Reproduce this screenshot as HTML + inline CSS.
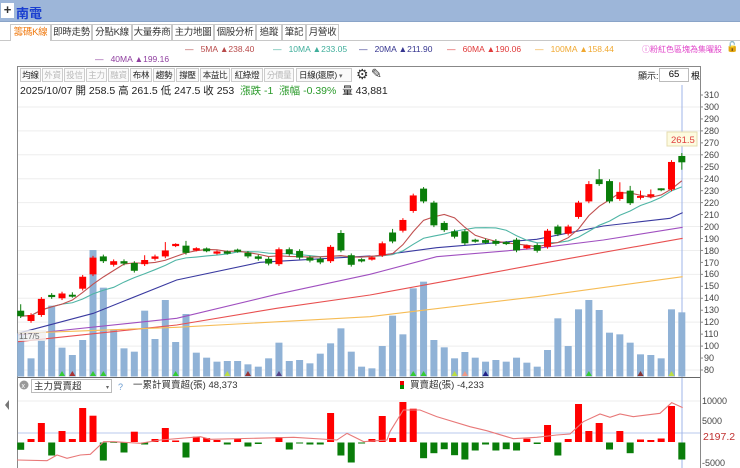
<!DOCTYPE html>
<html><head><meta charset="utf-8"><style>
*{margin:0;padding:0;box-sizing:border-box}
body{width:740px;height:468px;overflow:hidden;background:#fff;font-family:"Liberation Sans","Noto Sans CJK TC",sans-serif;position:relative}
.abs{position:absolute;white-space:nowrap}
#top{left:0;top:0;width:740px;height:22px;background:#9db6d9;border-bottom:1px solid #8aa4c8}
#plus{left:1px;top:3px;width:13px;height:15px;background:#fff;font-size:13px;line-height:14px;text-align:center;font-weight:bold;color:#333}
#title{left:16px;top:3px;font-size:13px;font-weight:bold;color:#1a3fd0}
.tab{position:absolute;top:24px;height:17px;border:1px solid #c8c8c8;border-bottom:none;font-size:9.5px;line-height:16px;text-align:center;color:#333;background:#fff;white-space:nowrap;overflow:hidden;letter-spacing:-0.3px}
#tabline{left:0;top:40px;width:740px;height:1px;background:#c8c8c8}
.lg{font-size:8.5px;top:44px}
.tb{position:absolute;top:68px;height:14px;border:1px solid #ccc;font-size:8.5px;line-height:12px;text-align:center;color:#222;background:#fafafa;white-space:nowrap;overflow:hidden;letter-spacing:-0.3px}
.tb.g{color:#b8b8b8}
</style></head><body>
<div id="top" class="abs"></div>
<div id="plus" class="abs">+</div>
<div id="title" class="abs">南電</div>
<div class="tab" style="left:10px;width:41px;color:#f07a10">籌碼K線</div>
<div class="tab" style="left:51px;width:41px">即時走勢</div>
<div class="tab" style="left:92px;width:40px">分點K線</div>
<div class="tab" style="left:132px;width:40px">大量券商</div>
<div class="tab" style="left:172px;width:42px">主力地圖</div>
<div class="tab" style="left:214px;width:42px">個股分析</div>
<div class="tab" style="left:256px;width:26px">追蹤</div>
<div class="tab" style="left:282px;width:24px">筆記</div>
<div class="tab" style="left:306px;width:33px">月營收</div>
<div id="tabline" class="abs" style="left:0"></div>
<div class="abs" style="left:11px;top:40px;width:39px;height:1px;background:#fff"></div>

<div class="abs lg" style="left:185px;color:#b84a4a">—&nbsp;&nbsp; 5MA ▲238.40</div>
<div class="abs lg" style="left:273px;color:#3fae9b">—&nbsp;&nbsp; 10MA ▲233.05</div>
<div class="abs lg" style="left:359px;color:#35358f">—&nbsp;&nbsp; 20MA ▲211.90</div>
<div class="abs lg" style="left:447px;color:#e03a3a">—&nbsp;&nbsp; 60MA ▲190.06</div>
<div class="abs lg" style="left:535px;color:#f0a830">—&nbsp;&nbsp; 100MA ▲158.44</div>
<div class="abs lg" style="left:642px;color:#e040c8;font-size:8px">ⓘ粉紅色區塊為集曜股</div>
<div class="abs" style="left:726px;top:42px;font-size:10px">🔓</div>
<div class="abs lg" style="left:95px;top:54px;color:#9040a0">—&nbsp;&nbsp; 40MA ▲199.16</div>

<div class="abs" style="left:17px;top:66px;width:684px;height:402px;border:1px solid #888;border-bottom:none"></div>
<div class="tb" style="left:20px;width:21px">均線</div>
<div class="tb g" style="left:42px;width:21px">外資</div>
<div class="tb g" style="left:64px;width:21px">投信</div>
<div class="tb g" style="left:86px;width:21px">主力</div>
<div class="tb g" style="left:108px;width:21px">融資</div>
<div class="tb" style="left:130px;width:22px">布林</div>
<div class="tb" style="left:153px;width:22px">趨勢</div>
<div class="tb" style="left:176px;width:23px">撐壓</div>
<div class="tb" style="left:200px;width:30px">本益比</div>
<div class="tb" style="left:231px;width:32px">紅綠燈</div>
<div class="tb g" style="left:264px;width:30px">分價量</div>
<div class="tb" style="left:296px;width:56px;text-align:left;padding-left:2px">日線(還原) <span style="font-size:7px;color:#666">▾</span></div>
<div class="abs" style="left:356px;top:66px;font-size:14px;color:#333">⚙</div>
<div class="abs" style="left:371px;top:66px;font-size:13px;color:#333">✎</div>
<div class="abs" style="left:638px;top:69px;font-size:9px;color:#222">顯示:</div>
<div class="abs" style="left:659px;top:68px;width:30px;height:14px;border:1px solid #bbb;font-size:9.5px;text-align:center;line-height:12px">65</div>
<div class="abs" style="left:691px;top:69px;font-size:9px">根</div>
<div class="abs" style="left:20px;top:83px;font-size:10.5px;color:#222">2025/10/07 開 258.5 高 261.5 低 247.5 收 253 &nbsp;<span style="color:#2a9a2a">漲跌 -1 &nbsp;漲幅 -0.39%</span> &nbsp;量 43,881</div>

<svg class="abs" style="left:0;top:0" width="740" height="468" id="sv">
<g id="grid"></g><g id="vol"></g><g id="ma"></g><g id="cdl"></g><g id="low"></g>
<g font-family="Liberation Sans" font-size="9" fill="#444" id="ax">
<text x="704" y="98">310</text><text x="704" y="110">300</text><text x="704" y="122">290</text><text x="704" y="134">280</text><text x="704" y="146">270</text><text x="704" y="158">260</text><text x="704" y="170">250</text><text x="704" y="182">240</text><text x="704" y="194">230</text><text x="704" y="206">220</text><text x="704" y="218">210</text><text x="704" y="230">200</text><text x="704" y="242">190</text><text x="704" y="254">180</text><text x="704" y="266">170</text><text x="704" y="277">160</text><text x="704" y="289">150</text><text x="704" y="301">140</text><text x="704" y="313">130</text><text x="704" y="325">120</text><text x="704" y="337">110</text><text x="704" y="349">100</text><text x="704" y="361">90</text><text x="704" y="373">80</text>
<text x="702" y="404">10000</text><text x="702" y="424">5000</text><text x="702" y="466">-5000</text>
</g>
<text x="703" y="440" font-family="Liberation Sans" font-size="10.5" fill="#c03030">2197.2</text>
<rect x="667" y="132" width="30" height="14" fill="#fdfbe0" stroke="#e6dcb0"/>
<text x="671" y="143" font-family="Liberation Sans" font-size="9.5" fill="#e04040">261.5</text>
<rect x="18" y="330" width="28" height="11" fill="#f0f0f0" opacity="0.8"/>
<text x="19" y="339" font-family="Liberation Sans" font-size="8.5" fill="#666">117/5</text>
<line x1="18" y1="377.5" x2="700" y2="377.5" stroke="#666"/>
<circle cx="24" cy="385" r="4.5" fill="#999"/><text x="21.5" y="388" font-size="7" fill="#fff" font-family="Liberation Sans">x</text>
<rect x="31.5" y="379.5" width="80" height="13" fill="#fff" stroke="#bbb"/>
<text x="34" y="389.5" font-size="9.5" fill="#333" font-family="Liberation Sans,Noto Sans CJK TC">主力買賣超</text>
<text x="106" y="389" font-size="6" fill="#666">▾</text>
<text x="118" y="390" font-size="9" fill="#6a9bd0" font-family="Liberation Sans">?</text>
<text x="133" y="388" font-size="9.5" fill="#333" font-family="Liberation Sans,Noto Sans CJK TC">一累計買賣超(張) 48,373</text>
<rect x="400" y="381" width="4" height="4" fill="#e00"/><rect x="400" y="385" width="4" height="4" fill="#080"/>
<text x="410" y="388" font-size="9.5" fill="#333" font-family="Liberation Sans,Noto Sans CJK TC">買賣超(張) -4,233</text>
<polygon points="5,405 9,400 9,410" fill="#777"/>
</svg>
<script>
var NS="http://www.w3.org/2000/svg";
function el(g,t,a){var e=document.createElementNS(NS,t);for(var k in a)e.setAttribute(k,a[k]);document.getElementById(g).appendChild(e);return e;}
function py(p){return 95+(310-p)*1.1957;}
function X(i){return 20.7+i*10.33;}
for(var p=300;p>=80;p-=20){el("grid","line",{x1:18,x2:700,y1:py(p),y2:py(p),stroke:"#eeeeee"});}
for(var p=310;p>=80;p-=10){el("grid","line",{x1:700,x2:703,y1:py(p),y2:py(p),stroke:"#888"});}
el("grid","line",{x1:700.5,x2:700.5,y1:85,y2:468,stroke:"#888"});
el("grid","line",{x1:18,x2:700,y1:401,y2:401,stroke:"#eee"});
el("grid","line",{x1:18,x2:700,y1:433,y2:433,stroke:"#b8c8ec"});
el("grid","line",{x1:682,x2:682,y1:85,y2:468,stroke:"#9fb4e8"});
var C=[[129.6,125,135],[121,126],[126,139.5],[142.8,141],[140,144],[142.3,142,145],[148,158],[160,174],[175,171],[168,171],[171,169],[169.5,163],[168.5,172,176],[173,175],[175,180,187],[184.3,184.8,186],[184,178,188],[180.7,181.2],[181,180],[178,178.5],[178.5,178],[180,179.6],[178,175],[175,173],[173,169],[168.5,181],[181,177],[179.5,174],[174,171.5],[173,170],[171,183],[194.6,180,197],[176,168],[172,171.5],[173,173.6],[176,186],[195,187.5,198],[196.5,205.5],[213,226],[231.7,221,233],[220,201],[203,197],[196,191.5],[196,186],[188.3,188],[188,187,190],[188,185.5],[186.3,186],[189,180],[182.5,183.5],[184.5,179.7],[183,196.5],[200,193.5],[194,200],[208,220],[221,235.5,238],[239.5,235.5,248],[238,221],[223,229,237],[230,219.5,234],[224,225.5,230],[225,227,231],[231.3,231,232],[231,254],[259,253.7,261.5,247.5]];
var V1=[490,565,510,407,533,555,510,240,353,478,535,545,422,507,390,516,432,548,563,575,573,573,583,590,565,518,573,570,580,551,520,475,545,590];
var V2=[685,618,527,583,445,425,600,622,655,636,653,665,660,665,653,668,680,630,535,618,508,480,510,578,583,608,643,645,655,508,517];
for(var i=0;i<65;i++){var t=i<34?170+V1[i]/3:140+V2[i-34]/3;el("vol","rect",{x:X(i)-3.5,y:t,width:7,height:376.5-t,fill:"#90b2d6"});}
var tri=[[4,"#3c3"],[5,"#a33"],[7,"#3c3"],[8,"#3c3"],[15,"#3c3"],[20,"#bd4"],[22,"#933"],[25,"#548"],[38,"#3c3"],[39,"#3c3"],[42,"#bd4"],[43,"#e98"],[45,"#228"],[55,"#3c3"],[60,"#833"],[63,"#bd4"]];
tri.forEach(function(a){var x=X(a[0]);el("vol","polygon",{points:(x-3)+",376 "+(x+3)+",376 "+x+",371",fill:a[1]});});
var cl=C.map(function(c){return c[1];});
function ma(n){var pts=[];for(var i=0;i<65;i++){var s=0,k=0;for(var j=Math.max(0,i-n+1);j<=i;j++){s+=cl[j];k++;}pts.push(X(i)+","+py(s/k));}return pts.join(" ");}
function pl(arr,col){el("ma","polyline",{points:arr,fill:"none",stroke:col,"stroke-width":1.1});}
function cv(z4,z5){var s=[];z4.forEach(function(p){s.push((10+p[0]/3)+","+(170+p[1]/3));});z5.forEach(function(p){s.push((370+p[0]/3)+","+(140+p[1]/3));});return s.join(" ");}
pl(cv([[24,490],[250,430],[500,330],[750,277],[1080,258]],[[0,350],[200,323],[500,298],[700,258],[900,235],[938,218]]),"#3a3aa0");
pl(cv([[24,495],[500,445],[800,373],[1080,313]],[[0,403],[200,350],[500,325],[700,300],[938,262]]),"#a050c0");
pl(cv([[24,515],[500,465],[800,415],[1080,375]],[[0,465],[300,410],[600,355],[938,295]]),"#e85050");
pl(cv([[24,490],[500,472],[1080,440]],[[0,530],[500,470],[938,410]]),"#f6bc55");
pl(ma(10),"#4fb5a5");
pl(ma(5),"#c05050");
C.forEach(function(c,i){var x=X(i),o=c[0],k=c[1],up=k>=o,col=up?"#ff0000":"#0a7d0a";var hi=c[2]||Math.max(o,k)+1.5,lo=c[3]||Math.min(o,k)-1.5;
el("cdl","line",{x1:x,x2:x,y1:py(hi),y2:py(lo),stroke:col});var t=py(Math.max(o,k)),b=py(Math.min(o,k));if(b-t<1.5){t-=0.8;b+=0.8;}
el("cdl","rect",{x:x-3.5,y:t,width:7,height:b-t,fill:col});});
var H=[449.3,439,423,455,431,439,408,415.7,460,442.5,452,431.7,444,439,428,440.5,457,436.7,438,440,444,439,446,443.5,442,437,449,443,444,444,413,455,462,443,439,416,438,402,408.7,457.7,452.7,448.7,454.7,459,450,444,450,448.7,450,438.7,443.5,425,455,439,404,431,423,449,431,452.7,439.5,440,438.5,406,459];
H.forEach(function(h,i){var x=X(i),z=442;if(h<z)el("low","rect",{x:x-3.5,y:h,width:7,height:z-h,fill:"#ff0000"});else if(h>z)el("low","rect",{x:x-3.5,y:z+0.5,width:7,height:h-z,fill:"#0a7d0a"});});
var L=[[0,300],[90,302],[120,285],[150,295],[190,285],[220,283],[260,245],[290,245],[370,250],[430,240],[550,230],[580,238],[830,232],[960,240],[990,220],[1040,245],[1110,240]];
var L2=[[60,215],[100,150],[150,150],[200,170],[300,200],[350,212],[430,236],[500,232],[560,225],[600,222],[640,185],[690,162],[720,172],[750,162],[790,170],[870,160],[905,128],[938,143]];
var s=L.map(function(p){return (p[0]/3+17)+","+(360+p[1]/3);}).concat(L2.map(function(p){return (370+p[0]/3)+","+(360+p[1]/3);}));
el("low","polyline",{points:s.join(" "),fill:"none",stroke:"#e87878","stroke-width":1.1});
</script>
</body></html>
